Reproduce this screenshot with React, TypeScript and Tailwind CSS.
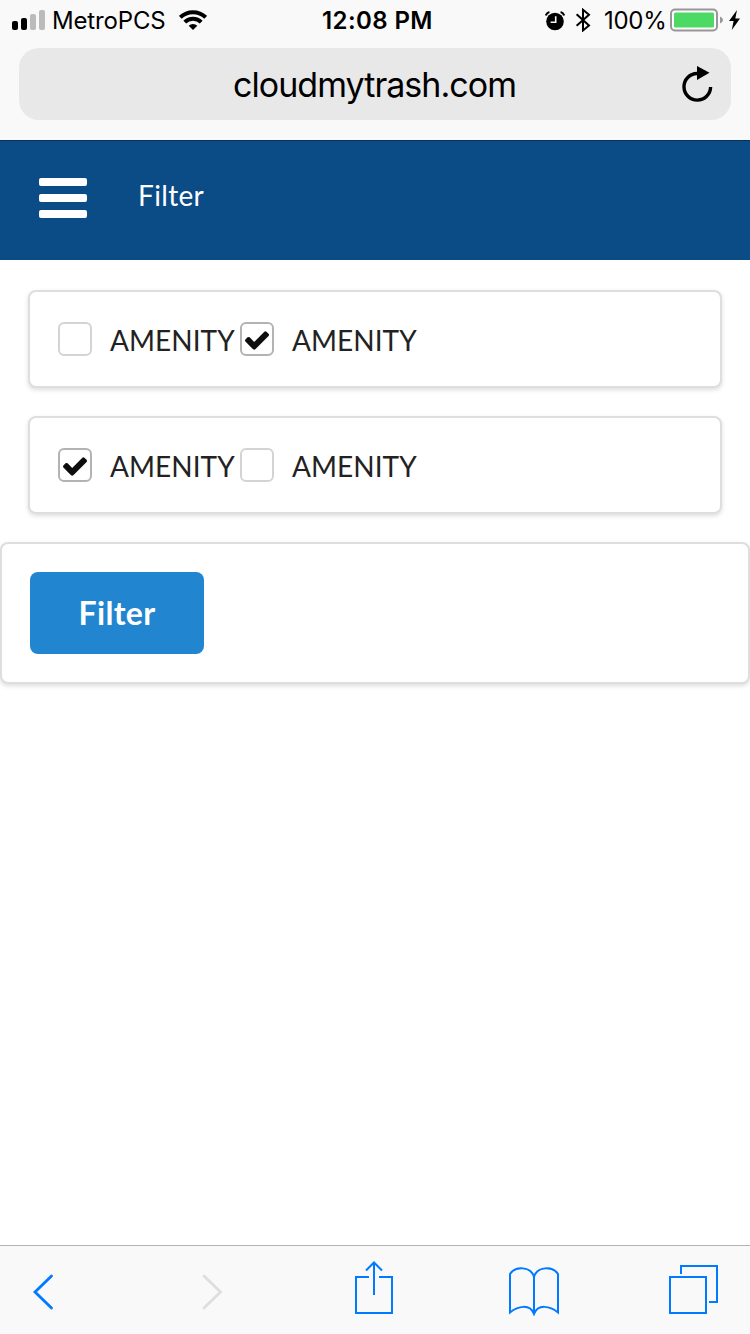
function StatusBar() {
  return (
    <div className="flex h-10 items-center pt-px font-['Inter','Liberation_Sans',sans-serif] text-2xl leading-none text-black">
      <div className="flex flex-1 items-center pl-3">
        <svg className="-mt-px h-5 w-[33px]" viewBox="0 0 33 20">
          <rect x="0" y="11" width="6" height="9" rx="2" fill="#000" />
          <rect x="9" y="8" width="6" height="12" rx="2" fill="#000" />
          <rect x="18" y="4" width="6" height="16" rx="2" fill="#bbb" />
          <rect x="27" y="0" width="6" height="20" rx="2" fill="#bbb" />
        </svg>
        <span className="ml-[7px] w-[127px] whitespace-nowrap tracking-[-0.15px]">MetroPCS</span>
        <svg className="-mt-px h-5 w-7" viewBox="0 0 28 20">
          <g fill="none" stroke="#000" strokeWidth="4">
            <path d="M1.3 7.400a18 18 0 0 1 25.4 0" />
            <path d="M5.8 12.100a11.6 11.6 0 0 1 16.4 0" />
          </g>
          <path d="M14 20 9.7 15.7a6.1 6.1 0 0 1 8.6 0z" />
        </svg>
      </div>
      <span className="w-[110px] whitespace-nowrap pl-px font-semibold tracking-[0.4px]">12:08 PM</span>
      <div className="flex flex-1 items-center justify-end pr-[10px]">
        <svg className="mr-2.5 h-5 w-5" viewBox="0 0 20 20">
          <circle cx="10" cy="10.500" r="8.800" />
          <path d="M10.7 5.3v6H5.6" fill="none" stroke="#f9f9f9" strokeWidth="1.6" />
          <path d="M.8 4.500Q1.6 1.900 4.400 1M19.200 4.500Q18.400 1.900 15.600 1" fill="none" stroke="#000" strokeWidth="2" />
        </svg>
        <svg className="mr-[13px] -mt-px h-6 w-4" viewBox="0 0 16 24" fill="none" stroke="#000" strokeWidth="2">
          <path d="M1.6 6.2 14 17.400l-6 5V1.800l6 5L1.600 17.800" />
        </svg>
        <span className="w-[66px] whitespace-nowrap tracking-[-0.3px]">100%</span>
        <svg className="-mt-px h-6 w-[53px]" viewBox="0 0 53 24">
          <rect x="1" y="1.5" width="46" height="21" rx="4" fill="#fff" stroke="#979797" strokeWidth="2" />
          <rect x="4" y="4.5" width="40" height="15" rx="1.5" fill="#4cd964" />
          <path d="M50 8.500q3 1.200 3 3.500t-3 3.500z" fill="#979797" />
        </svg>
        <svg className="-mt-px ml-[6px] h-5 w-[11px]" viewBox="0 0 11 20">
          <path d="M8 0 0 11h4.600L2.800 20 11 8.400H6.300z" />
        </svg>
      </div>
    </div>
  );
}

function AddressBar() {
  return (
    <div className="mx-[19px] mt-2 flex h-[72px] items-center rounded-[20px] bg-[#e8e8e8] pr-[18px] font-['Inter','Liberation_Sans',sans-serif] text-black">
      <span className="ml-[214px] flex-1 whitespace-nowrap text-[34px] tracking-[-0.95px]">cloudmytrash.com</span>
      <svg className="-ml-px h-9 w-[31px]" viewBox="0 0 31 36">
        <path d="M15 7.500A13.300 13.300 0 1 0 28.600 21" fill="none" stroke="#000" strokeWidth="3.400" />
        <path d="M15 0v14l12.500-7.200z" />
      </svg>
    </div>
  );
}

function Amenity({ checked = false }: { checked?: boolean }) {
  return (
    <label className="flex w-[182px] items-center">
      <span
        className={`flex size-[34px] items-center justify-center rounded-md border-2 bg-white ${
          checked ? "border-[#b3b3b4]" : "border-[#d4d4d5]"
        }`}
      >
        {checked && (
          <svg className="mt-0.5 h-[19px] w-6" viewBox="121 334 1550 1188" fill="#0d0d0d">
            <path d="M1671 566q0 40-28 68l-724 724-136 136q-28 28-68 28t-68-28l-136-136-362-362q-28-28-28-68t28-68l136-136q28-28 68-28t68 28l294 295 656-657q28-28 68-28t68 28l136 136q28 28 28 68z" />
          </svg>
        )}
      </span>
      <span className="ml-[18px] mt-0.5 whitespace-nowrap text-[28px] leading-none tracking-[0.05px] text-[#222]">AMENITY</span>
    </label>
  );
}

const card = "rounded-lg border-2 border-[#dededf] bg-white px-7 shadow-[0_2px_4px_rgba(34,36,38,0.15)]";

function Toolbar() {
  return (
    <div className="flex h-[89px] items-start border-t border-[#b2b2b2] bg-[#f9f9f9] pt-[14px]">
      <svg className="ml-8 h-[56px] w-6" viewBox="0 0 24 56" fill="none" stroke="#007aff" strokeWidth="2.8" strokeLinecap="round">
        <path d="M19.500 16 3 32l16.500 16" />
      </svg>
      <svg className="ml-[145px] h-[56px] w-6" viewBox="0 0 24 56" fill="none" stroke="#dedede" strokeWidth="2.8" strokeLinecap="round">
        <path d="M3 16l16.500 16L3 48" />
      </svg>
      <svg className="ml-[129px] h-[56px] w-10" viewBox="0 0 40 56" fill="none" stroke="#007aff" strokeWidth="2">
        <path d="M15 17H2v36h36V17H25M20 35V3M12 10.500l8-8 8 8" />
      </svg>
      <svg className="ml-[114px] h-[56px] w-[52px]" viewBox="0 0 52 56" fill="none" stroke="#007aff" strokeWidth="2">
        <path d="M26 53V17C23 6 7 6 2 14v38.500c8-6.500 20-9 24 1.500 4-10.500 16-8 24-1.500V14C45 6 29 6 26 17" />
      </svg>
      <svg className="ml-[108px] h-[56px] w-[52px]" viewBox="0 0 52 56" fill="none" stroke="#007aff" strokeWidth="2">
        <path d="M2 17h36v36H2zM13 14V6h36v36h-8" />
      </svg>
    </div>
  );
}

export default function App() {
  return (
    <div className="flex h-[1334px] w-[750px] flex-col overflow-hidden bg-white font-['Lato',sans-serif]">
      <div className="h-[140px] bg-[#f9f9f9]">
        <StatusBar />
        <AddressBar />
      </div>
      <header className="flex h-[120px] items-center border-t border-[#0a3255] bg-[#0b4c87] pl-[39px] text-white">
        <div className="mt-[-5px] flex flex-col gap-2">
          <span className="h-2 w-12 rounded-[2px] bg-white" />
          <span className="h-2 w-12 rounded-[2px] bg-white" />
          <span className="h-2 w-12 rounded-[2px] bg-white" />
        </div>
        <span className="-mt-[11px] ml-[51px] text-[28px] leading-none tracking-[0.35px]">Filter</span>
      </header>
      <main className="flex flex-1 flex-col pt-[30px]">
        <div className="mx-7 flex flex-col gap-7">
          <section className={`${card} flex h-[98px] items-center`}>
            <Amenity />
            <Amenity checked />
          </section>
          <section className={`${card} flex h-[98px] items-center`}>
            <Amenity checked />
            <Amenity />
          </section>
        </div>
        <section className={`${card} mt-7 flex h-[142px] items-center`}>
          <button className="h-[82px] w-[174px] rounded-lg bg-[#2185d0] text-[32px] font-bold leading-none tracking-[0.3px] text-white">
            Filter
          </button>
        </section>
      </main>
      <Toolbar />
    </div>
  );
}
